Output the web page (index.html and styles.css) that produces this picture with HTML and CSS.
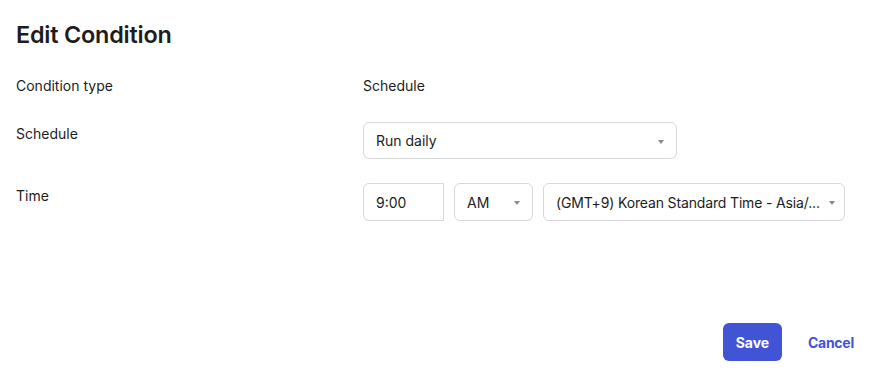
FILE: index.html
```html
<!DOCTYPE html>
<html lang="en">
<head>
    <meta charset="UTF-8">
    <meta name="viewport" content="width=device-width, initial-scale=1.0">
    <title>Edit Condition</title>
    <link rel="stylesheet" href="styles.css">
</head>
<body>
    <div class="dialog">
        <h1 class="title">Edit Condition</h1>

        <div class="form">
            <div class="row row-static">
                <div class="label">Condition type</div>
                <div class="value">Schedule</div>
            </div>

            <div class="row">
                <div class="label">Schedule</div>
                <div class="field select select-wide">
                    <span class="select-text">Run daily</span>
                    <span class="caret"></span>
                </div>
            </div>

            <div class="row">
                <div class="label label-time">Time</div>
                <div class="time-group">
                    <div class="field input-time">9:00</div>
                    <div class="field select select-ampm">
                        <span class="select-text">AM</span>
                        <span class="caret"></span>
                    </div>
                    <div class="field select select-zone">
                        <span class="select-text zone-text">(GMT+9) Korean Standard Time - Asia/...</span>
                        <span class="caret"></span>
                    </div>
                </div>
            </div>
        </div>

        <div class="footer">
            <button class="btn btn-primary">Save</button>
            <button class="btn btn-link">Cancel</button>
        </div>
    </div>
</body>
</html>
```

FILE: styles.css
```css
* {
    box-sizing: border-box;
}
body {
    margin: 0;
    font-family: Inter, "Noto Sans", Arial, sans-serif;
    font-size: 14px;
    color: #1d1d21;
    background-color: #fff;
}
.dialog {
    width: 880px;
    height: 373px;
    padding: 19px 10px 12px 16px;
    display: flex;
    flex-direction: column;
}
.title {
    margin: 0;
    font-size: 23.4px;
    line-height: 32px;
    font-weight: 600;
    letter-spacing: -0.2px;
    color: #1d1d21;
}
.form {
    margin-top: 25px;
    display: flex;
    flex-direction: column;
    gap: 24px;
}
.row {
    display: grid;
    grid-template-columns: 347px auto;
    align-items: start;
}
.row-static {
    margin-bottom: 2px;
}
.label {
    line-height: 20px;
    padding-top: 2px;
}
.row-static .label {
    padding-top: 0;
}
.label-time {
    padding-top: 3px;
}
.value {
    line-height: 20px;
}
.field {
    height: 38px;
    border: 1px solid #d7d7dc;
    border-radius: 6px;
    display: flex;
    align-items: center;
    padding: 0 12px;
    background-color: #fff;
}
.select {
    justify-content: space-between;
    gap: 4px;
}
.select-text {
    white-space: nowrap;
}
.zone-text {
    letter-spacing: -0.15px;
}
.caret {
    flex: none;
    width: 0;
    height: 0;
    border-left: 3.5px solid transparent;
    border-right: 3.5px solid transparent;
    border-top: 4px solid #8a8a90;
    margin-top: 2px;
}
.select-wide {
    width: 314px;
    height: 37px;
}
.time-group {
    display: flex;
    gap: 10px;
}
.input-time {
    width: 81px;
    border-radius: 6px 0 0 6px;
}
.select-ampm {
    width: 79px;
}
.select-zone {
    width: 302px;
    padding-right: 9px;
}
.footer {
    margin-top: auto;
    display: flex;
    justify-content: flex-end;
    align-items: center;
    gap: 10px;
}
.btn {
    font-family: inherit;
    font-size: 14px;
    font-weight: 700;
    height: 38px;
    border-radius: 6px;
    cursor: pointer;
}
.btn-primary {
    background-color: #4254d6;
    color: #fff;
    border: none;
    width: 59px;
    padding: 0;
}
.btn-link {
    background: none;
    border: none;
    color: #4254d6;
    padding: 0 16px;
    letter-spacing: -0.25px;
}
```
